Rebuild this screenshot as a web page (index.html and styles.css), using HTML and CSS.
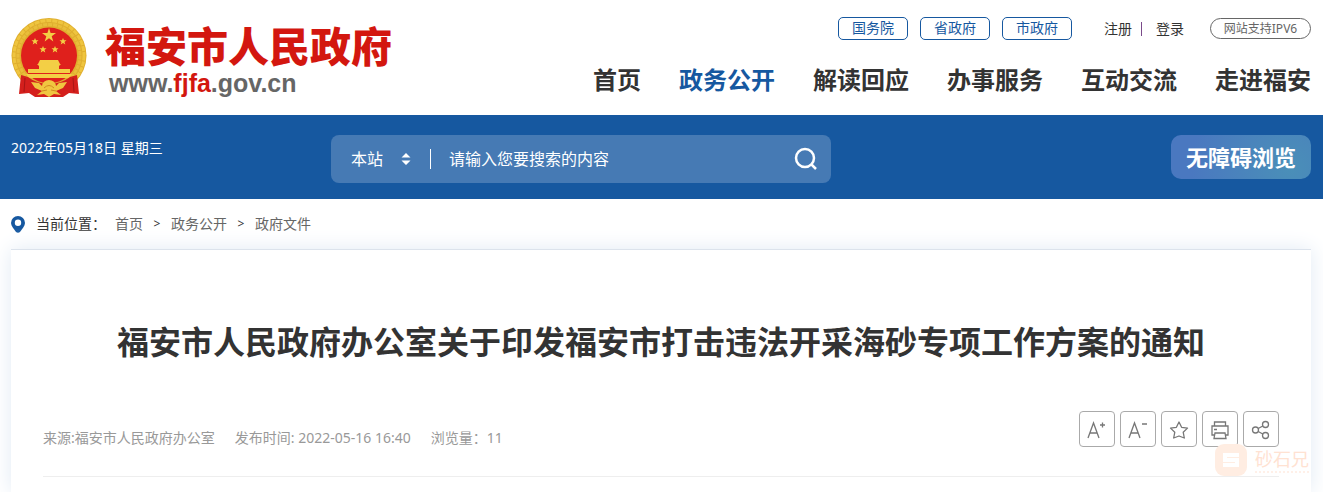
FILE: index.html
```html
<!DOCTYPE html>
<html lang="zh-CN">
<head>
  <meta charset="UTF-8">
  <meta name="viewport" content="width=device-width, initial-scale=1">
  <title>福安市人民政府</title>
  <link rel="stylesheet" href="styles.css">
</head>
<body>

  <header class="header">
    <a class="logo" href="#">
      <svg class="emblem" viewBox="0 0 76 80" aria-hidden="true">
        <circle cx="38" cy="37.500" r="37.500" fill="#dfae2e"/>
        <circle cx="38" cy="37.500" r="35" fill="none" stroke="#efc53f" stroke-width="3" stroke-dasharray="5 1"/>
        <circle cx="38" cy="37.500" r="31" fill="none" stroke="#e9bd3a" stroke-width="3" stroke-dasharray="4 1"/>
        <circle cx="38" cy="37.500" r="28" fill="#df201c"/>
        <g fill="#f3cf45">
          <path d="M38 10 L39.600 15 L45 15 L40.700 18.200 L42.300 23.500 L38 20.300 L33.700 23.500 L35.300 18.200 L31 15 L36.400 15Z"/>
          <path d="M24 20 l1 2.300 2.500 0 -2 1.600 .8 2.600 -2.300 -1.500 -2.300 1.500 .8 -2.600 -2 -1.600 2.500 0Z"/>
          <path d="M52 20 l1 2.300 2.500 0 -2 1.600 .8 2.600 -2.300 -1.500 -2.300 1.500 .8 -2.600 -2 -1.600 2.500 0Z"/>
          <path d="M32 28 l1 2.300 2.500 0 -2 1.600 .8 2.600 -2.300 -1.500 -2.300 1.500 .8 -2.600 -2 -1.600 2.500 0Z"/>
          <path d="M44 28 l1 2.300 2.500 0 -2 1.600 .8 2.600 -2.300 -1.500 -2.300 1.500 .8 -2.600 -2 -1.600 2.500 0Z"/>
          <path d="M29 42 h18 l2 4 h-22Z M26 46 h24 l-2 2 h-20Z M28 48 h20 v3 h-20Z M17 51 h42 v4 h-42Z M15 56 h46 l-3 4 h-40Z"/>
        </g>
        <path fill="#d41f1c" d="M10 57 L17 59 Q26 66 38 66 Q50 66 59 59 L66 57 L68 76 L58 75 L52 79 H24 L18 75 L8 76Z"/>
        <path fill="#f0c640" d="M20 64 l8 1 3 3 a7 6 0 0 1 14 0 l3 -3 8 -1 -4 6 -7 3 5 4 -7 -1 -5 3 -5 -3 -7 1 5 -4 -7 -3Z"/>
        <path fill="none" stroke="#d08a20" d="M33 70 q5 -5 10 0 M31 73 l5 -1 M45 73 l-5 -1"/>
        <path fill="none" stroke="#a81515" d="M14 60 L13 74 M62 60 L63 74"/>
      </svg>
      <span class="logo-text">
        <strong class="logo-name">福安市人民政府</strong>
        <span class="logo-url">www.<em>fjfa</em>.gov.cn</span>
      </span>
    </a>

    <div class="header-right">
      <div class="top-links">
        <a class="gov-link" href="#">国务院</a>
        <a class="gov-link" href="#">省政府</a>
        <a class="gov-link" href="#">市政府</a>
        <div class="account">
          <a href="#">注册</a>
          <a href="#">登录</a>
        </div>
        <span class="ipv6">网站支持IPV6</span>
      </div>
      <nav class="nav">
        <a href="#">首页</a>
        <a class="active" href="#">政务公开</a>
        <a href="#">解读回应</a>
        <a href="#">办事服务</a>
        <a href="#">互动交流</a>
        <a href="#">走进福安</a>
      </nav>
    </div>
  </header>

  <div class="banner">
    <div class="date">2022年05月18日 星期三</div>
    <form class="search">
      <select class="scope" aria-label="搜索范围">
        <option>本站</option>
      </select>
      <svg class="scope-arrows" viewBox="0 0 10 14" aria-hidden="true">
        <path fill="#fff" d="M5 1 L9.500 5.500 H.5Z M5 13 L9.500 8.500 H.5Z"/>
      </svg>
      <input class="keyword" type="text" aria-label="搜索" placeholder="请输入您要搜索的内容">
      <button class="search-btn" type="submit" aria-label="搜索">
        <svg viewBox="0 0 24 24" fill="none" stroke="#fff" stroke-width="2.500">
          <circle cx="11" cy="11" r="9"/>
          <path d="M17 17 L22 22"/>
        </svg>
      </button>
    </form>
    <div class="banner-right">
      <button class="barrier-free" type="button">无障碍浏览</button>
    </div>
  </div>

  <nav class="crumbs" aria-label="当前位置">
    <svg class="pin" viewBox="0 0 14 17" aria-hidden="true">
      <path fill="#1658a0" fill-rule="evenodd" d="M7 0 A7 7 0 0 1 14 7 C14 10 11 13 9 16 Q7 17.500 5 16 C3 13 0 10 0 7 A7 7 0 0 1 7 0Z M7 3.500 A3.200 3.200 0 1 0 7 9.900 A3.200 3.200 0 1 0 7 3.500Z"/>
    </svg>
    <span class="crumbs-label">当前位置：</span>
    <a href="#">首页</a>
    <span class="sep">&gt;</span>
    <a href="#">政务公开</a>
    <span class="sep">&gt;</span>
    <a href="#">政府文件</a>
  </nav>

  <main class="article">
    <h1>福安市人民政府办公室关于印发福安市打击违法开采海砂专项工作方案的通知</h1>
    <div class="article-bar">
      <div class="meta">
        <span>来源:福安市人民政府办公室</span>
        <span>发布时间: 2022-05-16 16:40</span>
        <span>浏览量：11</span>
      </div>
      <div class="tools">
        <button type="button" aria-label="放大字体">
          <svg viewBox="0 0 34 34"><path d="M8 26 L13.500 11 L19 26 M10 21 H17 M20 13 H25 M22.500 10.500 V15.500"/></svg>
        </button>
        <button type="button" aria-label="缩小字体">
          <svg viewBox="0 0 34 34"><path d="M8 26 L13.500 11 L19 26 M10 21 H17 M21 12 H26"/></svg>
        </button>
        <button type="button" aria-label="收藏">
          <svg viewBox="0 0 34 34"><path stroke-linejoin="round" d="M17 10 L19.600 15.300 L25.500 16.100 L21.200 20.200 L22.300 26 L17 24 L11.700 26 L12.800 20.200 L8.500 16.100 L14.400 15.300Z"/></svg>
        </button>
        <button type="button" aria-label="打印">
          <svg viewBox="0 0 34 34"><path d="M11.500 14 V10 H22.500 V14 M11 23 H9 V14 H25 V23 H23 M12 21 H22 L23 26.500 H11Z M11 17.500 H14"/></svg>
        </button>
        <button type="button" aria-label="分享">
          <svg viewBox="0 0 34 34"><circle cx="11.500" cy="18" r="3"/><circle cx="21.500" cy="12.500" r="3"/><circle cx="21.500" cy="23.500" r="3"/><path d="M14.200 16.500 L18.800 14 M14.200 19.500 L18.800 22"/></svg>
        </button>
      </div>
    </div>
  </main>

  <div class="watermark">
    <svg viewBox="0 0 32 32" aria-hidden="true">
      <rect width="32" height="32" rx="9" fill="#ffede2"/>
      <path fill="none" stroke="#fff" stroke-width="4" d="M24 11 H10 V16 H22 V21 H8"/>
    </svg>
    <span>砂石兄</span>
  </div>

</body>
</html>
```

FILE: styles.css
```css
* {
  box-sizing: border-box;
}
body {
  margin: 0;
  font-family: "Noto Sans", "Noto Sans CJK SC", sans-serif;
  font-size: 14px;
  color: #333;
  background: #fff;
  position: relative;
  min-height: 100vh;
}
a {
  color: inherit;
  text-decoration: none;
}
button, input, select {
  font-family: inherit;
  border: none;
  background: none;
  padding: 0;
}
button {
  cursor: pointer;
}

/* header */
.header {
  display: flex;
  justify-content: space-between;
  height: 115px;
  padding: 17px 12px 0 11px;
}
.logo {
  display: flex;
  gap: 18px;
}
.emblem {
  width: 76px;
  height: 82px;
}
.logo-text {
  display: flex;
  flex-direction: column;
}
.logo-name {
  font-family: "Noto Sans CJK SC", sans-serif;
  font-size: 41px;
  font-weight: 900;
  line-height: 54px;
  color: #d3170f;
}
.logo-url {
  padding-left: 4px;
  font-family: "Liberation Sans", Arial, sans-serif;
  font-size: 25px;
  font-weight: bold;
  line-height: 24px;
  color: #666;
}
.logo-url em {
  font-style: normal;
  color: #d3170f;
}
.header-right {
  display: flex;
  flex-direction: column;
  align-items: flex-end;
  gap: 20px;
}
.top-links {
  display: flex;
  align-items: center;
  height: 23px;
}
.gov-link {
  width: 70px;
  height: 23px;
  margin-right: 12px;
  border: 1px solid #1658a0;
  border-radius: 5px;
  line-height: 20px;
  text-align: center;
  color: #1658a0;
}
.account {
  display: flex;
  align-items: center;
  margin: 0 26px 0 20px;
  line-height: 14px;
}
.account a + a {
  margin-left: 9px;
  padding-left: 14px;
  border-left: 1px solid #7a4a8a;
}
.ipv6 {
  width: 101px;
  height: 21px;
  border: 1px solid #666;
  border-radius: 11px;
  font-size: 12px;
  line-height: 19px;
  text-align: center;
  color: #666;
}
.nav {
  display: flex;
  gap: 38px;
  font-size: 24px;
  font-weight: bold;
  line-height: 40px;
}
.nav .active {
  color: #1658a0;
}

/* search banner */
.banner {
  display: grid;
  grid-template-columns: 320px 500px 1fr;
  height: 84px;
  padding: 20px 12px 0 11px;
  background: #1658a0;
  color: #fff;
}
.date {
  line-height: 25px;
}
.search {
  display: flex;
  align-items: center;
  height: 48px;
  padding: 0 13px 0 20px;
  border-radius: 8px;
  background: #467ab4;
}
.scope {
  appearance: none;
  width: 50px;
  font-size: 16px;
  color: #fff;
}
.scope-arrows {
  width: 10px;
  height: 14px;
}
.keyword {
  flex: 1;
  min-width: 0;
  height: 20px;
  margin-left: 19px;
  padding-left: 18px;
  border-left: 1px solid #fff;
  font-size: 16px;
  color: #fff;
}
.keyword::placeholder {
  color: #fff;
  opacity: 1;
}
.search-btn svg {
  display: block;
  width: 24px;
  height: 24px;
}
.banner-right {
  text-align: right;
}
.barrier-free {
  width: 140px;
  height: 44px;
  padding-bottom: 2px;
  border-radius: 10px;
  background: radial-gradient(circle at 85% 75%, #4a8fb8, #4a78c0 80%);
  font-size: 22px;
  font-weight: bold;
  color: #fff;
}

/* breadcrumb */
.crumbs {
  display: flex;
  align-items: center;
  height: 50px;
  padding: 0 11px;
  line-height: 20px;
  color: #666;
}
.pin {
  width: 14px;
  height: 17px;
  margin-right: 11px;
}
.crumbs-label {
  margin-right: 9px;
  color: #333;
}
.sep {
  width: 28px;
  font-size: 12px;
  text-align: center;
  color: #333;
}

/* article */
.article {
  margin: 0 12px 0 11px;
  padding: 60px 32px 15px;
  border-top: 1px solid #dce3ec;
  background: #fff;
  box-shadow: 0 0 20px #e1eaf4;
  clip-path: inset(-20px -20px 0);
}
h1 {
  margin: 0;
  font-size: 32px;
  line-height: 64px;
  text-align: center;
}
.article-bar {
  display: flex;
  justify-content: space-between;
  margin-top: 37px;
  padding-bottom: 11px;
  border-bottom: 1px solid #eee;
}
.meta {
  display: flex;
  gap: 20px;
  line-height: 54px;
  color: #999;
}
.tools {
  display: flex;
  gap: 5px;
}
.tools button {
  width: 36px;
  height: 36px;
  border: 1px solid #aaa;
  border-radius: 4px;
}
.tools svg {
  display: block;
  width: 34px;
  height: 34px;
  fill: none;
  stroke: #777;
  stroke-width: 1.3;
}

.watermark {
  position: absolute;
  right: 14px;
  bottom: 16px;
  display: flex;
  align-items: center;
  gap: 8px;
  font-size: 18px;
  line-height: 24px;
  color: #ffe2d2;
  pointer-events: none;
}
.watermark svg {
  width: 32px;
  height: 32px;
}
.watermark span {
  border-bottom: 2px dotted #fff0e8;
}
```
